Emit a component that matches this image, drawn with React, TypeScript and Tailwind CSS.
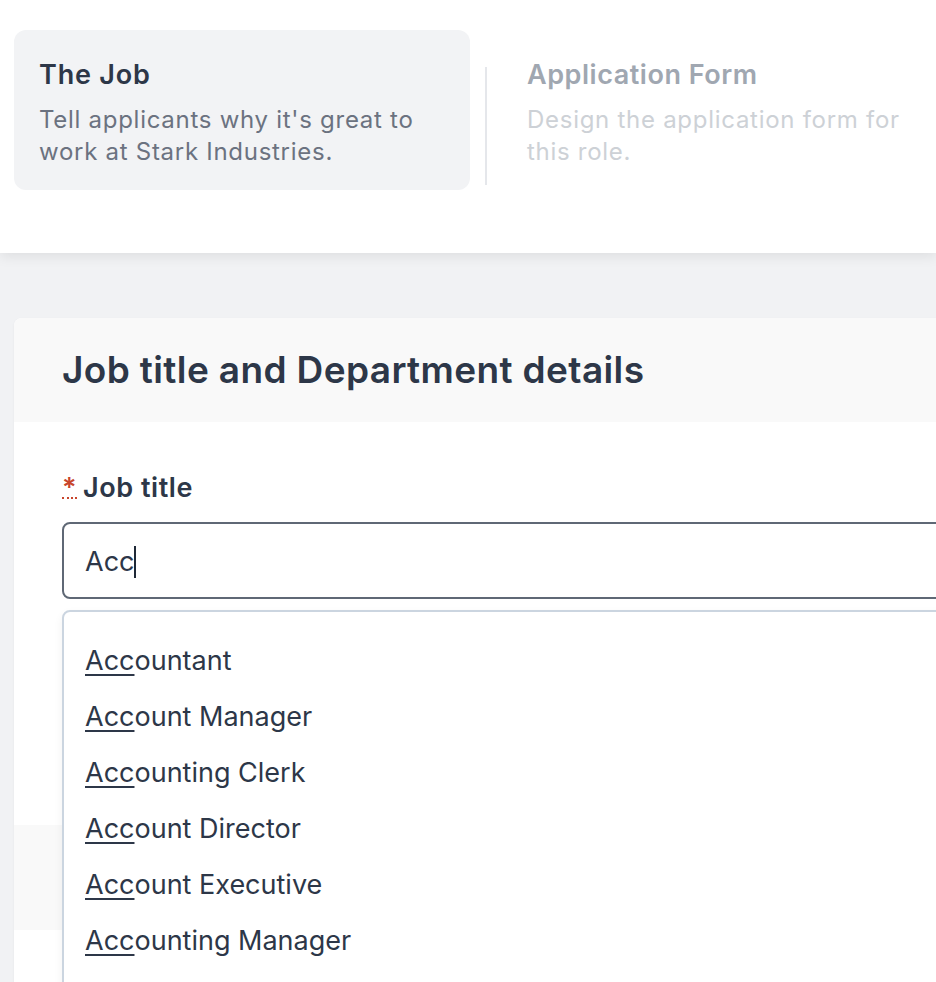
import React from "react";

const suggestions = [
  "Accountant",
  "Account Manager",
  "Accounting Clerk",
  "Account Director",
  "Account Executive",
  "Accounting Manager",
];

function Suggestion({ text }: { text: string }) {
  return (
    <li className="h-[56px] flex items-center px-[21px] text-[27px] text-[#2d3748]">
      <span className="underline decoration-[1.5px] underline-offset-[4px]">{text.slice(0, 3)}</span>
      <span>{text.slice(3)}</span>
    </li>
  );
}

export default function App() {
  return (
    <div className="w-[936px] h-[982px] overflow-hidden bg-[#f1f2f4] font-['Inter',sans-serif]">
      {/* Steps */}
      <div className="relative z-10 h-[253px] bg-white shadow-[0_4px_12px_rgba(0,0,0,0.08)] flex items-start pt-[30px] pl-[14px]">
        <div className="w-[456px] h-[160px] shrink-0 rounded-xl bg-[#f2f3f5] px-[25px] pt-[29px]">
          <h2 className="text-[27px] leading-[32px] font-semibold text-[#2d3748] tracking-[0.03em]">The Job</h2>
          <p className="mt-[13px] text-[24px] leading-[32px] text-[#6b7280] tracking-[0.03em]">
            Tell applicants why it's great to work at Stark Industries.
          </p>
        </div>
        <div className="mt-[37px] ml-[15px] w-[2px] h-[118px] bg-[#e5e7eb] shrink-0" />
        <div className="w-[440px] shrink-0 pl-[40px] pt-[29px]">
          <h2 className="text-[27px] leading-[32px] font-semibold text-[#a0a7b1] tracking-[0.02em]">Application Form</h2>
          <p className="mt-[13px] text-[24px] leading-[32px] text-[#cdd1d6] tracking-[0.03em]">
            Design the application form for this role.
          </p>
        </div>
      </div>

      {/* Form card */}
      <div className="pt-[65px] pl-[14px]">
        <div className="w-[1000px] bg-white rounded-tl-lg shadow-[0_1px_3px_rgba(0,0,0,0.05)] overflow-hidden">
          <div className="h-[104px] bg-[#f9f9f9] px-[48px] flex items-center">
            <h1 className="text-[37px] font-semibold text-[#2d3748] tracking-[0.01em]">Job title and Department details</h1>
          </div>
          <div className="pt-[50px]">
            <div className="px-[48px]">
              <label className="flex items-center text-[27px] leading-[32px] font-semibold text-[#2d3748] tracking-[0.02em]">
                <abbr
                  title="required"
                  className="text-[#c8452c] no-underline border-b-2 border-dotted border-[#c8452c] leading-[18px] mr-[6px] mt-[2px]"
                >
                  *
                </abbr>
                Job title
              </label>
              <div className="relative mt-[18px]">
                <div className="h-[77px] border-2 border-[#5f6875] rounded-lg flex items-center pl-[21px] pt-[3px] text-[27px] text-[#2d3748]">
                  <span>Acc</span>
                  <span className="w-[2px] h-[32px] bg-[#1f2937]" />
                </div>
                <ul className="absolute left-0 top-[88px] w-[960px] h-[400px] bg-white border-2 border-[#cbd5e0] rounded-tl-lg shadow-[0_4px_10px_rgba(0,0,0,0.06)] pt-[21px]">
                  {suggestions.map((s) => (
                    <Suggestion key={s} text={s} />
                  ))}
                </ul>
              </div>
            </div>
            <div className="h-[226px]" />
            <div className="h-[105px] bg-[#f9f9f9]" />
            <div className="h-[60px] bg-white" />
          </div>
        </div>
      </div>
    </div>
  );
}
